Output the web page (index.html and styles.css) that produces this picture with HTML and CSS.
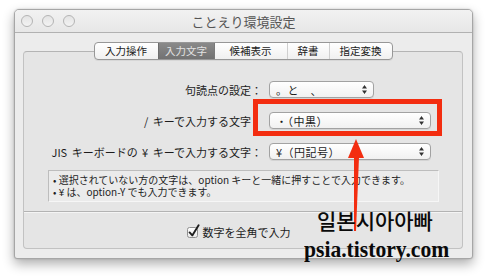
FILE: index.html
```html
<!DOCTYPE html>
<html lang="ja">
<head>
<meta charset="utf-8">
<title>ことえり環境設定</title>
<link rel="stylesheet" href="styles.css">
</head>
<body>
<div class="window">
  <div class="titlebar">
    <div class="lights"><span class="light"></span><span class="light"></span><span class="light"></span></div>
    <div class="title">ことえり環境設定</div>
  </div>
  <div class="content">
    <div class="tabs">
      <div class="seg s1">入力操作</div>
      <div class="seg s2 active">入力文字</div>
      <div class="seg s3">候補表示</div>
      <div class="seg s4">辞書</div>
      <div class="seg s5">指定変換</div>
    </div>
    <div class="tabbox">
      <div class="rows">
        <div class="row">
          <div class="label">句読点の設定：</div>
          <div class="popup short"><span class="val">。と　、</span>
            <svg class="updown" width="5" height="9" viewBox="0 0 5 9"><path d="M0 3.5 L2.5 0 L5 3.5Z M0 5.5 L2.5 9 L5 5.5Z" fill="#333"/></svg>
          </div>
        </div>
        <div class="row">
          <div class="label">/ キーで入力する文字：</div>
          <div class="popup long"><span class="val">・（中黒）</span>
            <svg class="updown" width="5" height="9" viewBox="0 0 5 9"><path d="M0 3.5 L2.5 0 L5 3.5Z M0 5.5 L2.5 9 L5 5.5Z" fill="#333"/></svg>
          </div>
        </div>
        <div class="row">
          <div class="label">JIS キーボードの ¥ キーで入力する文字：</div>
          <div class="popup long"><span class="val">¥（円記号）</span>
            <svg class="updown" width="5" height="9" viewBox="0 0 5 9"><path d="M0 3.5 L2.5 0 L5 3.5Z M0 5.5 L2.5 9 L5 5.5Z" fill="#333"/></svg>
          </div>
        </div>
      </div>
      <div class="info">
        <p>• 選択されていない方の文字は、option キーと一緒に押すことで入力できます。</p>
        <p>• ¥ は、option-Y でも入力できます。</p>
      </div>
      <div class="sep"></div>
      <div class="checkrow">
        <svg class="checkbox" width="15" height="15" viewBox="0 0 15 15">
          <defs><linearGradient id="cb" x1="0" y1="0" x2="0" y2="1"><stop offset="0" stop-color="#ffffff"/><stop offset="1" stop-color="#e9e9e9"/></linearGradient></defs>
          <rect x="1.5" y="3.5" width="10" height="10" rx="2" fill="url(#cb)" stroke="#8f8f8f"/>
          <path d="M3.6 8.4 L6.3 11.4 L12.6 1.2" fill="none" stroke="#1e1e1e" stroke-width="1.9" stroke-linecap="round" stroke-linejoin="round"/>
        </svg>
        <span>数字を全角で入力</span>
      </div>
    </div>
  </div>
</div>

<div class="annot-box"></div>
<svg class="annot-arrow" width="30" height="100" viewBox="0 0 30 100">
  <polygon points="13,0 21,19 5,19" fill="#f32d10"/>
  <polygon points="11,18 16,18 13,92 11,92" fill="#f32d10"/>
</svg>
<div class="watermark">
  <div class="ko">일본시아아빠</div>
  <div class="url">psia.tistory.com</div>
</div>
</body>
</html>
```
FILE: styles.css
```css
* { box-sizing: border-box; margin: 0; padding: 0; }
html, body { width: 487px; height: 280px; overflow: hidden; background: #ffffff; }
body {
  position: relative;
  padding: 9px 0 0 14px;
  font-family: "Noto Sans CJK JP", "Noto Sans", sans-serif;
  color: #1b1b1b;
}
.window {
  width: 459px;
  height: 250px;
  border: 1px solid #a6a6a6;
  border-radius: 5px 5px 3px 3px;
  background: #ececec;
  box-shadow: 0 5px 12px rgba(0,0,0,0.32), 0 0 2px rgba(0,0,0,0.18);
  display: flex;
  flex-direction: column;
  overflow: hidden;
}
.titlebar {
  height: 23px;
  border-bottom: 1px solid #b1b1b1;
  background: linear-gradient(#f2f2f2, #e7e7e7);
  display: grid;
  align-items: center;
  flex: none;
}
.titlebar > * { grid-area: 1 / 1; }
.lights { display: flex; gap: 9px; padding-left: 6px; justify-self: start; }
.light {
  width: 12px; height: 12px; border-radius: 50%;
  border: 1px solid #b4b4b4;
  background: linear-gradient(#e4e4e4, #f3f3f3);
}
.title {
  justify-self: center;
  font-size: 13px;
  line-height: 16px;
  color: #555555;
  padding-top: 1px;
}
.content {
  flex: 1;
  display: flex;
  flex-direction: column;
  padding: 9px 9px 9px 8px;
}
.tabs {
  position: relative;
  z-index: 2;
  align-self: center;
  display: flex;
  height: 18px;
  margin-bottom: -9px;
  border: 1px solid #979797;
  border-radius: 4px;
  background: linear-gradient(#ffffff, #f0f0f0);
  box-shadow: 0 1px 0 rgba(0,0,0,0.06);
  overflow: hidden;
}
.seg {
  display: flex; align-items: center; justify-content: center;
  font-size: 10.5px;
  line-height: 14px;
  color: #1a1a1a;
  border-left: 1px solid #cfcfcf;
}
.seg.s1 { width: 63px; border-left: none; }
.seg.s2 { width: 56px; }
.seg.s3 { width: 73px; }
.seg.s4 { width: 42px; }
.seg.s5 { width: 63px; }
.seg.active {
  background: linear-gradient(#8a8a8a, #727272);
  color: #e2e2e2;
  border-left-color: #6d6d6d;
}
.seg.active + .seg { border-left-color: #7a7a7a; }
.tabbox {
  flex: 1;
  border: 1px solid #c2c2c2;
  border-top-color: #b4b4b4;
  border-radius: 4px;
  background: #e5e5e5;
  padding: 29px 0 9px 0;
  display: flex;
  flex-direction: column;
}
.rows { display: flex; flex-direction: column; gap: 14px; }
.row { display: flex; align-items: center; gap: 7px; height: 17px; }
.label {
  width: 238px;
  text-align: right;
  font-size: 11px;
  line-height: 14px;
  word-spacing: 2px;
  color: #1c1c1c;
  white-space: nowrap;
}
.popup {
  height: 17px;
  border: 1px solid #a2a2a2;
  border-radius: 4px;
  background: linear-gradient(#ffffff, #f1f1f1);
  box-shadow: 0 1px 0 rgba(0,0,0,0.08);
  display: flex;
  align-items: center;
  justify-content: space-between;
  padding: 0 6px 0 6px;
}
.popup.short { width: 105px; }
.popup.long { width: 162px; }
.val { font-size: 11px; line-height: 14px; color: #1c1c1c; white-space: pre; letter-spacing: 0.5px; }
.updown { display: block; }
.info {
  margin: 10px 0 0 24px;
  width: 391px;
  height: 32px;
  border: 1px solid #bdbdbd;
  border-right-color: #f6f6f6;
  border-bottom-color: #f6f6f6;
  background: #ebebeb;
  padding: 3px 4px 0 4px;
}
.info p {
  font-size: 10px;
  line-height: 12px;
  color: #1e1e1e;
  white-space: nowrap;
}
.sep {
  margin-top: 9px;
  height: 2px;
  border-top: 1px solid #b3b3b3;
  border-bottom: 1px solid #f4f4f4;
}
.checkrow {
  margin-top: 11px;
  height: 15px;
  display: flex;
  align-items: center;
  justify-content: center;
  gap: 2px;
  padding-right: 10px;
  font-size: 11px;
  line-height: 14px;
  color: #1c1c1c;
}
.checkbox { display: block; }

.annot-box {
  position: absolute;
  left: 253px;
  top: 99px;
  width: 189px;
  height: 37px;
  border: 5px solid #f32d10;
  z-index: 5;
}
.annot-arrow {
  position: absolute;
  left: 343px;
  top: 139px;
  z-index: 5;
}
.watermark {
  position: absolute;
  left: 304px;
  top: 208px;
  z-index: 6;
  color: #0a0a0a;
}
.ko {
  margin-left: 13px;
  font-family: "Noto Sans CJK KR", sans-serif;
  font-weight: 500;
  font-size: 21px;
  line-height: 24px;
}
.url {
  margin-top: 4px;
  font-family: "Liberation Serif", serif;
  font-weight: 700;
  font-size: 24px;
  line-height: 26px;
  transform: scaleX(0.9);
  transform-origin: left center;
  white-space: nowrap;
}
```
